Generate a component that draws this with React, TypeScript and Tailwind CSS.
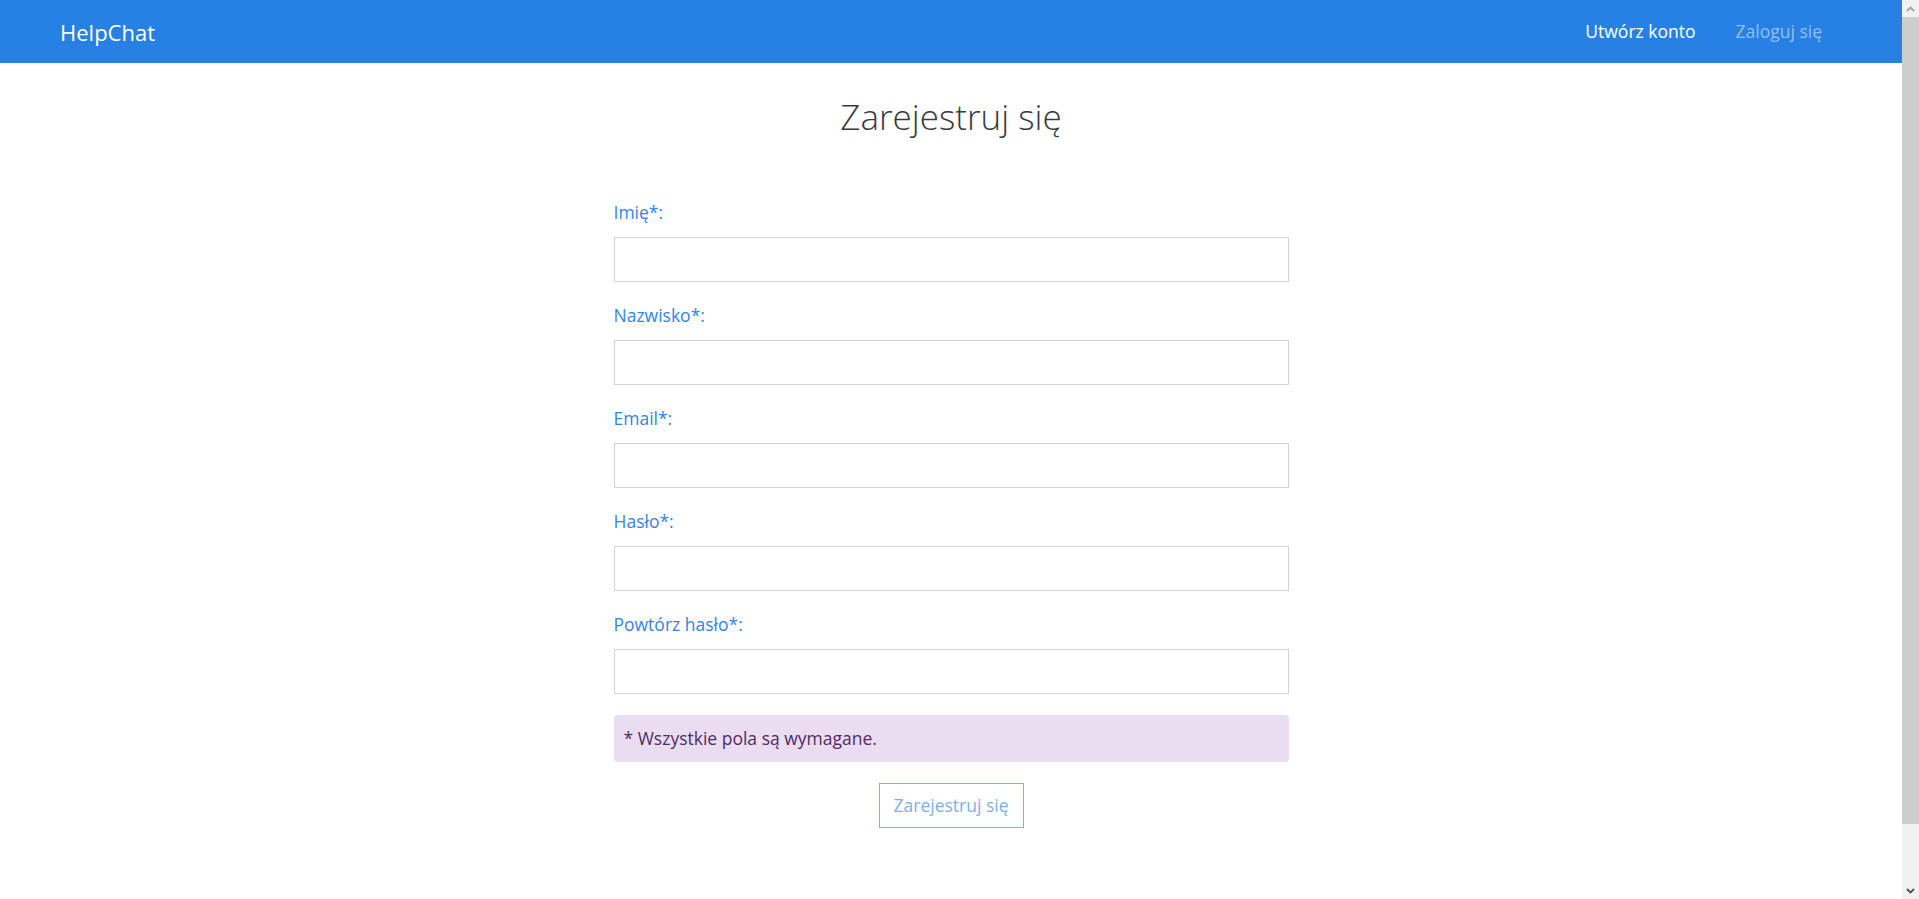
import React from 'react';

const font = { fontFamily: '"Open Sans", "Noto Sans", sans-serif' };

const fields = ['Imię*:', 'Nazwisko*:', 'Email*:', 'Hasło*:', 'Powtórz hasło*:'];

function Navbar() {
  return (
    <nav className="h-[63px] bg-[#2780e3] flex items-center justify-between pl-[60px] pr-[60px]">
      <a className="text-white text-[22px] leading-none">HelpChat</a>
      <ul className="flex items-center">
        <li className="px-[20px] text-white text-[17.5px]">Utwórz konto</li>
        <li className="px-[20px] text-[#93bff1] text-[17.5px]">Zaloguj się</li>
      </ul>
    </nav>
  );
}

// browser scrollbar strip on the right edge
function Scrollbar() {
  return (
    <div className="w-[17px] h-full bg-[#f1f1f1] flex flex-col">
      <div className="h-[17px] flex items-center justify-center text-[#a3a3a3]">
        <svg width="9" height="6" viewBox="0 0 9 6"><path d="M1 5 L4.5 1.5 L8 5" stroke="currentColor" strokeWidth="1.8" fill="none" /></svg>
      </div>
      <div className="h-[807px] bg-[#cdcdcd]" />
      <div className="flex-1" />
      <div className="h-[17px] flex items-center justify-center text-[#505050]">
        <svg width="9" height="6" viewBox="0 0 9 6"><path d="M1 1 L4.5 4.5 L8 1" stroke="currentColor" strokeWidth="1.8" fill="none" /></svg>
      </div>
    </div>
  );
}

export default function App() {
  return (
    <div className="h-[899px] overflow-hidden flex bg-white text-[#373a3c]" style={font}>
      <div className="flex-1 min-w-0">
        <Navbar />
        <h1 className="mt-[30px] text-center text-[35px] font-light leading-[48px] text-[#373a3c]">
          Zarejestruj się
        </h1>
        <form className="mx-auto mt-[57px] w-[675px]">
          {fields.map((label) => (
            <div key={label} className="mb-[19px]">
              <label className="block h-[28px] mb-[11px] text-[17.5px] leading-[28px] text-[#3385e6]">
                {label}
              </label>
              <input
                type={label.startsWith('Has') || label.startsWith('Pow') ? 'password' : 'text'}
                className="block w-full h-[45px] border border-[#ced4da] bg-white px-3 outline-none"
              />
            </div>
          ))}
          <div className="mt-[21px] h-[47px] rounded-[4px] bg-[#ebddf1] px-[10px] flex items-center text-[17.5px] text-[#4f2c61]">
            * Wszystkie pola są wymagane.
          </div>
          <div className="mt-[21px] flex justify-center">
            <button
              type="button"
              className="h-[45px] w-[145px] border border-[#7ab2ec] text-[#7ab2ec] text-[17.5px] bg-white"
            >
              Zarejestruj się
            </button>
          </div>
        </form>
      </div>
      <Scrollbar />
    </div>
  );
}
